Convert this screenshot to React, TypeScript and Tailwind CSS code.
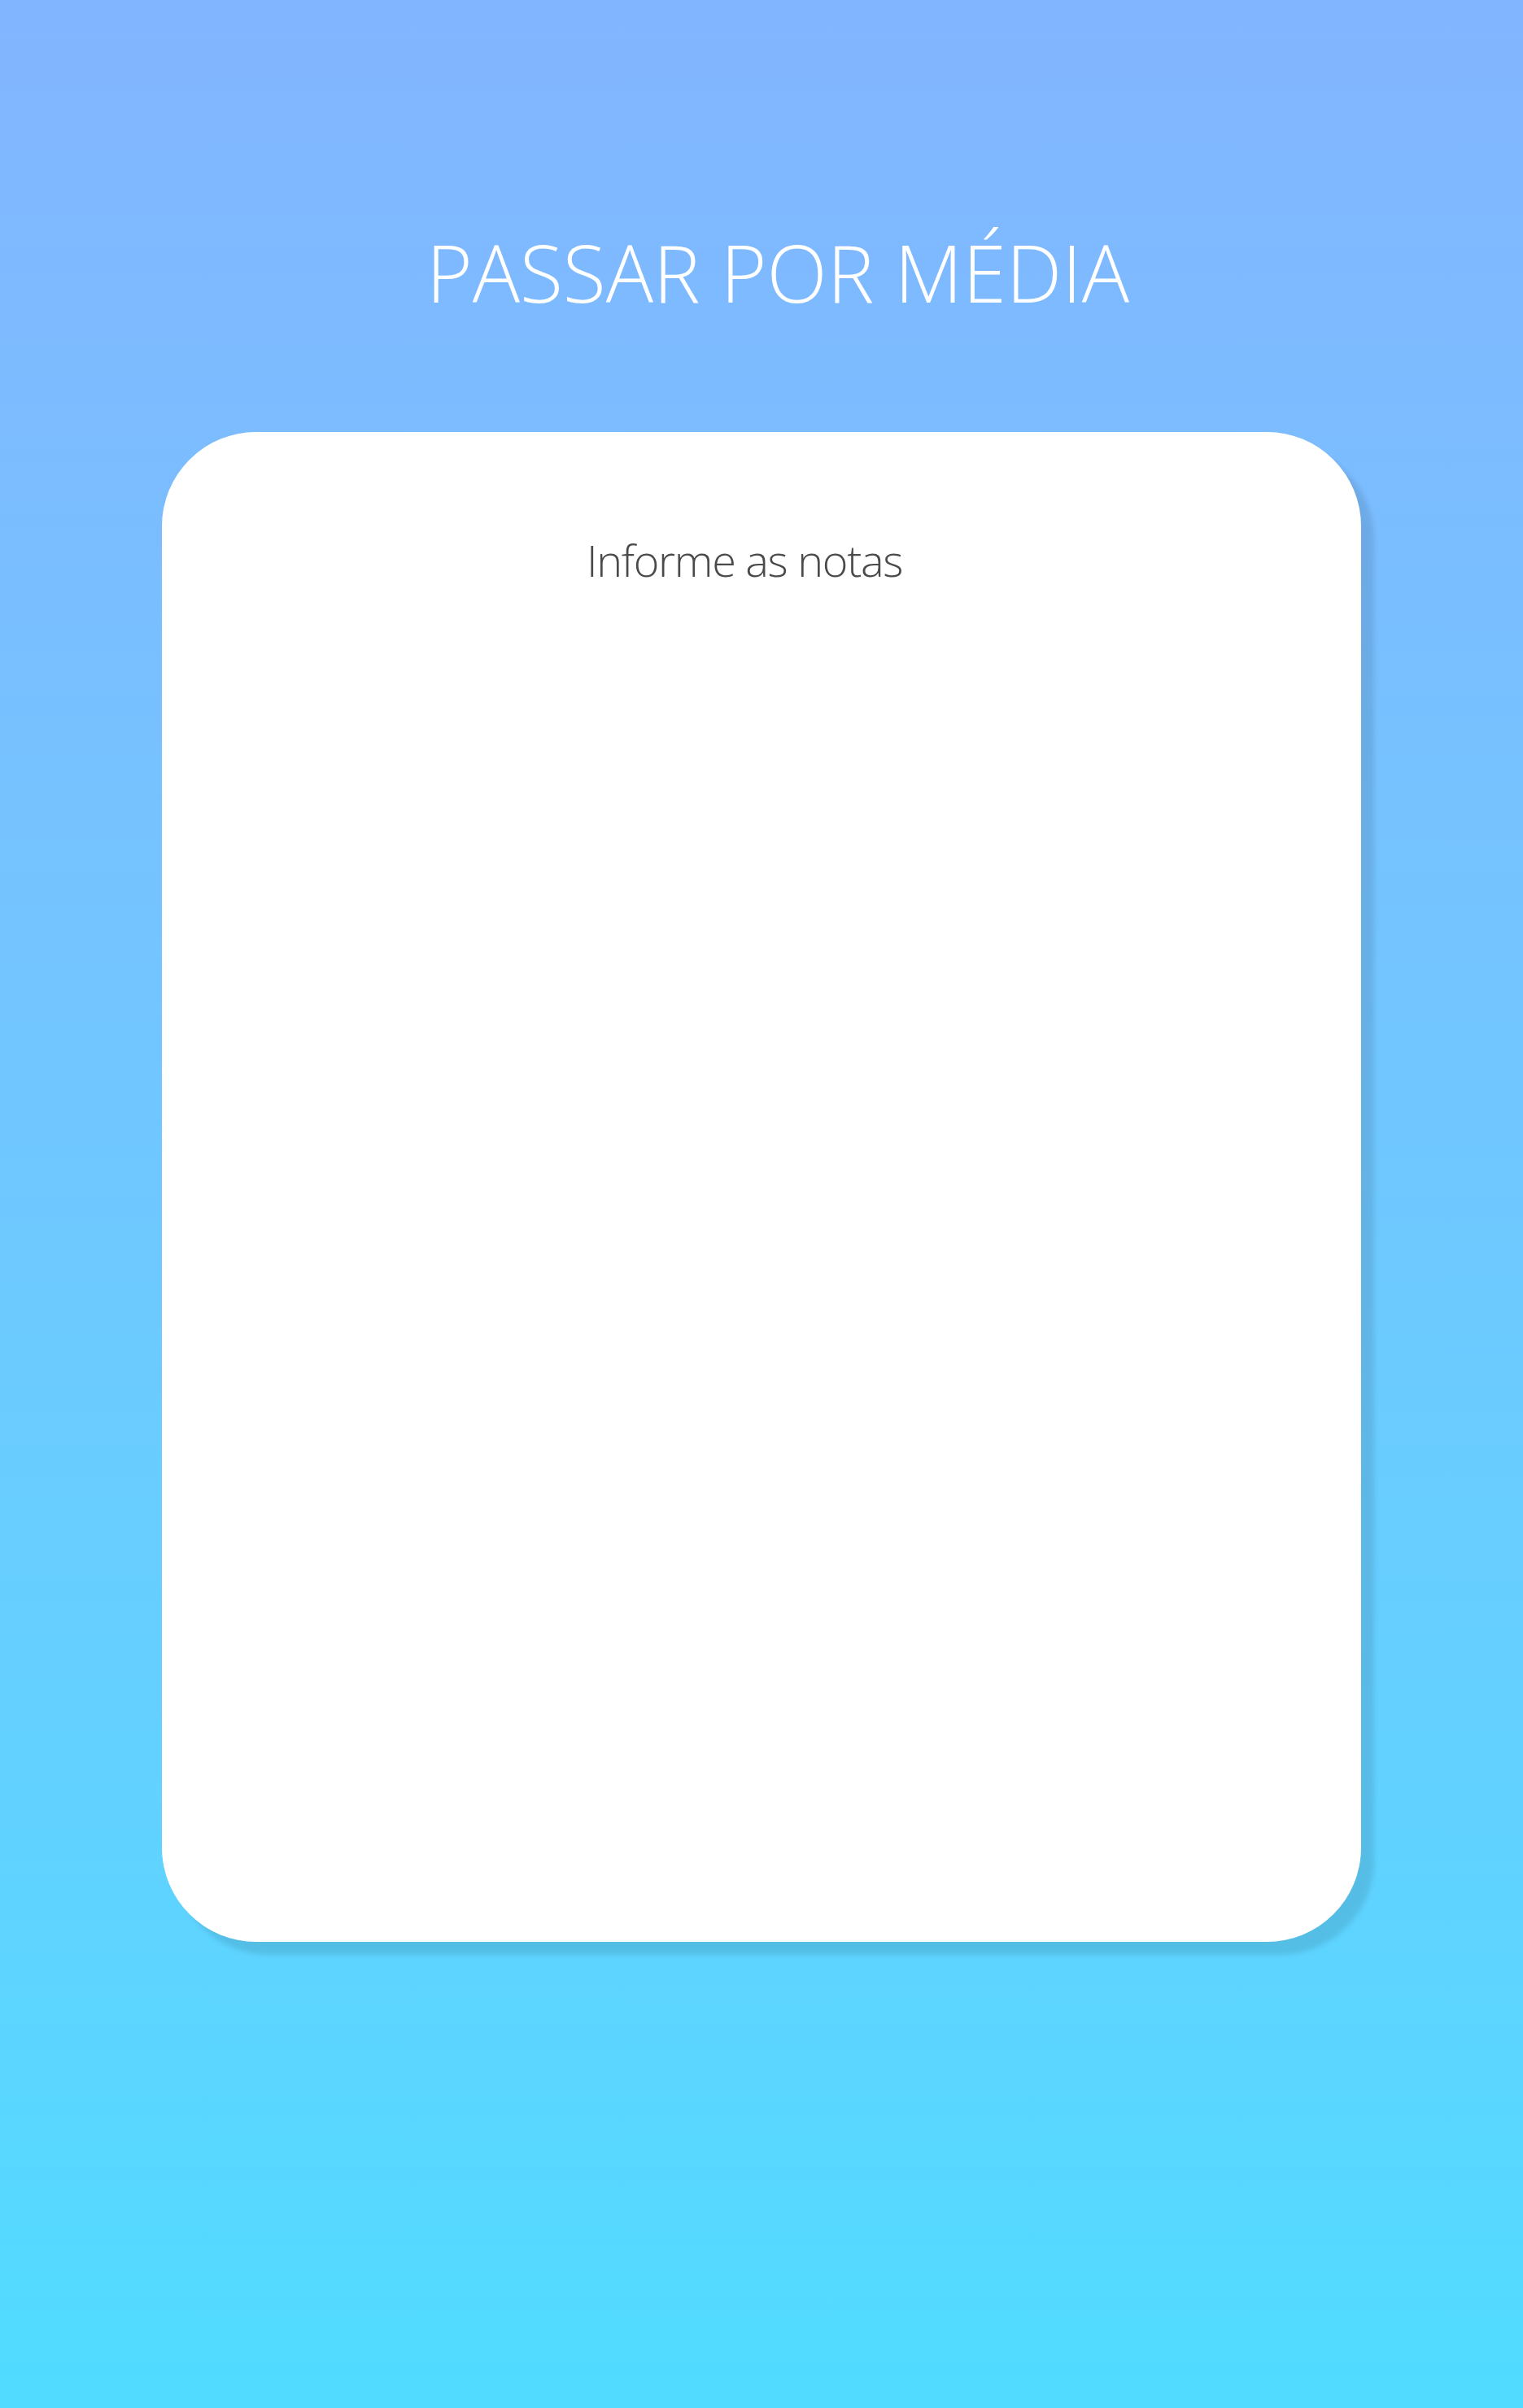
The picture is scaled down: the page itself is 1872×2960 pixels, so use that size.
import React from "react";

function App() {
    return (
        <div className="min-h-[2960px] w-full bg-gradient-to-b from-[#82b5ff] to-[#50dbff] font-['Open_Sans',sans-serif]">
            <div className="flex flex-col items-center pt-[286px]">
                <h1 className="pl-[40px] text-[97px] font-light leading-none text-white">PASSAR POR MÉDIA</h1>
                <main className="mt-[148px] h-[1856px] w-[1474px] rounded-[116px] bg-white shadow-[16px_16px_6px_rgba(0,0,0,0.1)]">
                    <p className="pt-[130px] pr-[42px] text-center text-[54px] font-light leading-none tracking-[-1.3px] text-[#4a4a4a]">
                        Informe as notas
                    </p>
                </main>
            </div>
        </div>
    );
}

export default App
